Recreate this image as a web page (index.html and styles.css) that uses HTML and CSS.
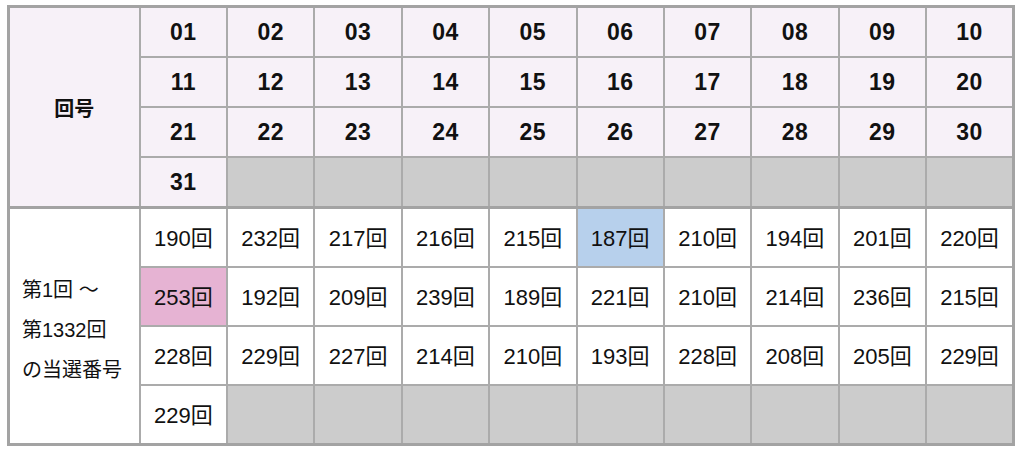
FILE: index.html
```html
<!DOCTYPE html>
<html lang="ja">
<head>
<meta charset="utf-8">
<title>回号</title>
<link rel="stylesheet" href="styles.css">
</head>
<body>
<table class="draw">
  <colgroup>
    <col class="c-label">
    <col class="c-num"><col class="c-num"><col class="c-num"><col class="c-num"><col class="c-num">
    <col class="c-num"><col class="c-num"><col class="c-num"><col class="c-num"><col class="c-num">
  </colgroup>
  <tbody class="head">
    <tr>
      <th class="label" rowspan="4">回号</th>
      <td>01</td><td>02</td><td>03</td><td>04</td><td>05</td><td>06</td><td>07</td><td>08</td><td>09</td><td>10</td>
    </tr>
    <tr>
      <td>11</td><td>12</td><td>13</td><td>14</td><td>15</td><td>16</td><td>17</td><td>18</td><td>19</td><td>20</td>
    </tr>
    <tr>
      <td>21</td><td>22</td><td>23</td><td>24</td><td>25</td><td>26</td><td>27</td><td>28</td><td>29</td><td>30</td>
    </tr>
    <tr>
      <td>31</td><td class="empty"></td><td class="empty"></td><td class="empty"></td><td class="empty"></td><td class="empty"></td><td class="empty"></td><td class="empty"></td><td class="empty"></td><td class="empty"></td>
    </tr>
  </tbody>
  <tbody class="body">
    <tr class="first">
      <th class="label" rowspan="4">第1回 〜<br>第1332回<br>の当選番号</th>
      <td>190回</td><td>232回</td><td>217回</td><td>216回</td><td>215回</td><td class="min">187回</td><td>210回</td><td>194回</td><td>201回</td><td>220回</td>
    </tr>
    <tr>
      <td class="max">253回</td><td>192回</td><td>209回</td><td>239回</td><td>189回</td><td>221回</td><td>210回</td><td>214回</td><td>236回</td><td>215回</td>
    </tr>
    <tr>
      <td>228回</td><td>229回</td><td>227回</td><td>214回</td><td>210回</td><td>193回</td><td>228回</td><td>208回</td><td>205回</td><td>229回</td>
    </tr>
    <tr>
      <td>229回</td><td class="empty"></td><td class="empty"></td><td class="empty"></td><td class="empty"></td><td class="empty"></td><td class="empty"></td><td class="empty"></td><td class="empty"></td><td class="empty"></td>
    </tr>
  </tbody>
</table>
</body>
</html>
```

FILE: styles.css
```css
html, body {
  margin: 0;
  padding: 0;
  background: #ffffff;
}

body {
  padding: 5px 0 0 7px;
  font-family: "Liberation Sans", "Noto Sans CJK JP", sans-serif;
  color: #111;
}

.draw {
  border-collapse: collapse;
  table-layout: fixed;
  width: 1008px;
  border: 3px solid #a3a3a3;
}

.c-label { width: 131px; }
.c-num { width: 87.3px; }

.draw td,
.draw th {
  border: 2px solid #ababab;
  text-align: center;
  vertical-align: middle;
  padding: 0;
}

.head td,
.head th {
  background: #f7f1f8;
  height: 47px;
  font-family: "Liberation Sans", "Noto Sans CJK JP", sans-serif;
  font-weight: 700;
  font-size: 23px;
  letter-spacing: 0.5px;
  padding-top: 1px;
}

.head th.label {
  font-family: "Noto Sans CJK JP", sans-serif;
  font-size: 20px;
  letter-spacing: 0;
}

.body td {
  height: 54px;
  font-size: 22px;
  font-weight: 400;
  line-height: 1;
  padding-top: 3px;
}

.body tr.first td,
.body tr.first th {
  border-top: 3px solid #a3a3a3;
}

.body th.label {
  font-weight: 400;
  font-size: 20px;
  line-height: 40px;
  text-align: left;
  padding-left: 12px;
  padding-top: 8px;
  background: #fff;
}

.draw td.empty {
  background: #cccccc;
}

.draw td.min {
  background: #b7d0ec;
}

.draw td.max {
  background: #e6b3d3;
}
```
